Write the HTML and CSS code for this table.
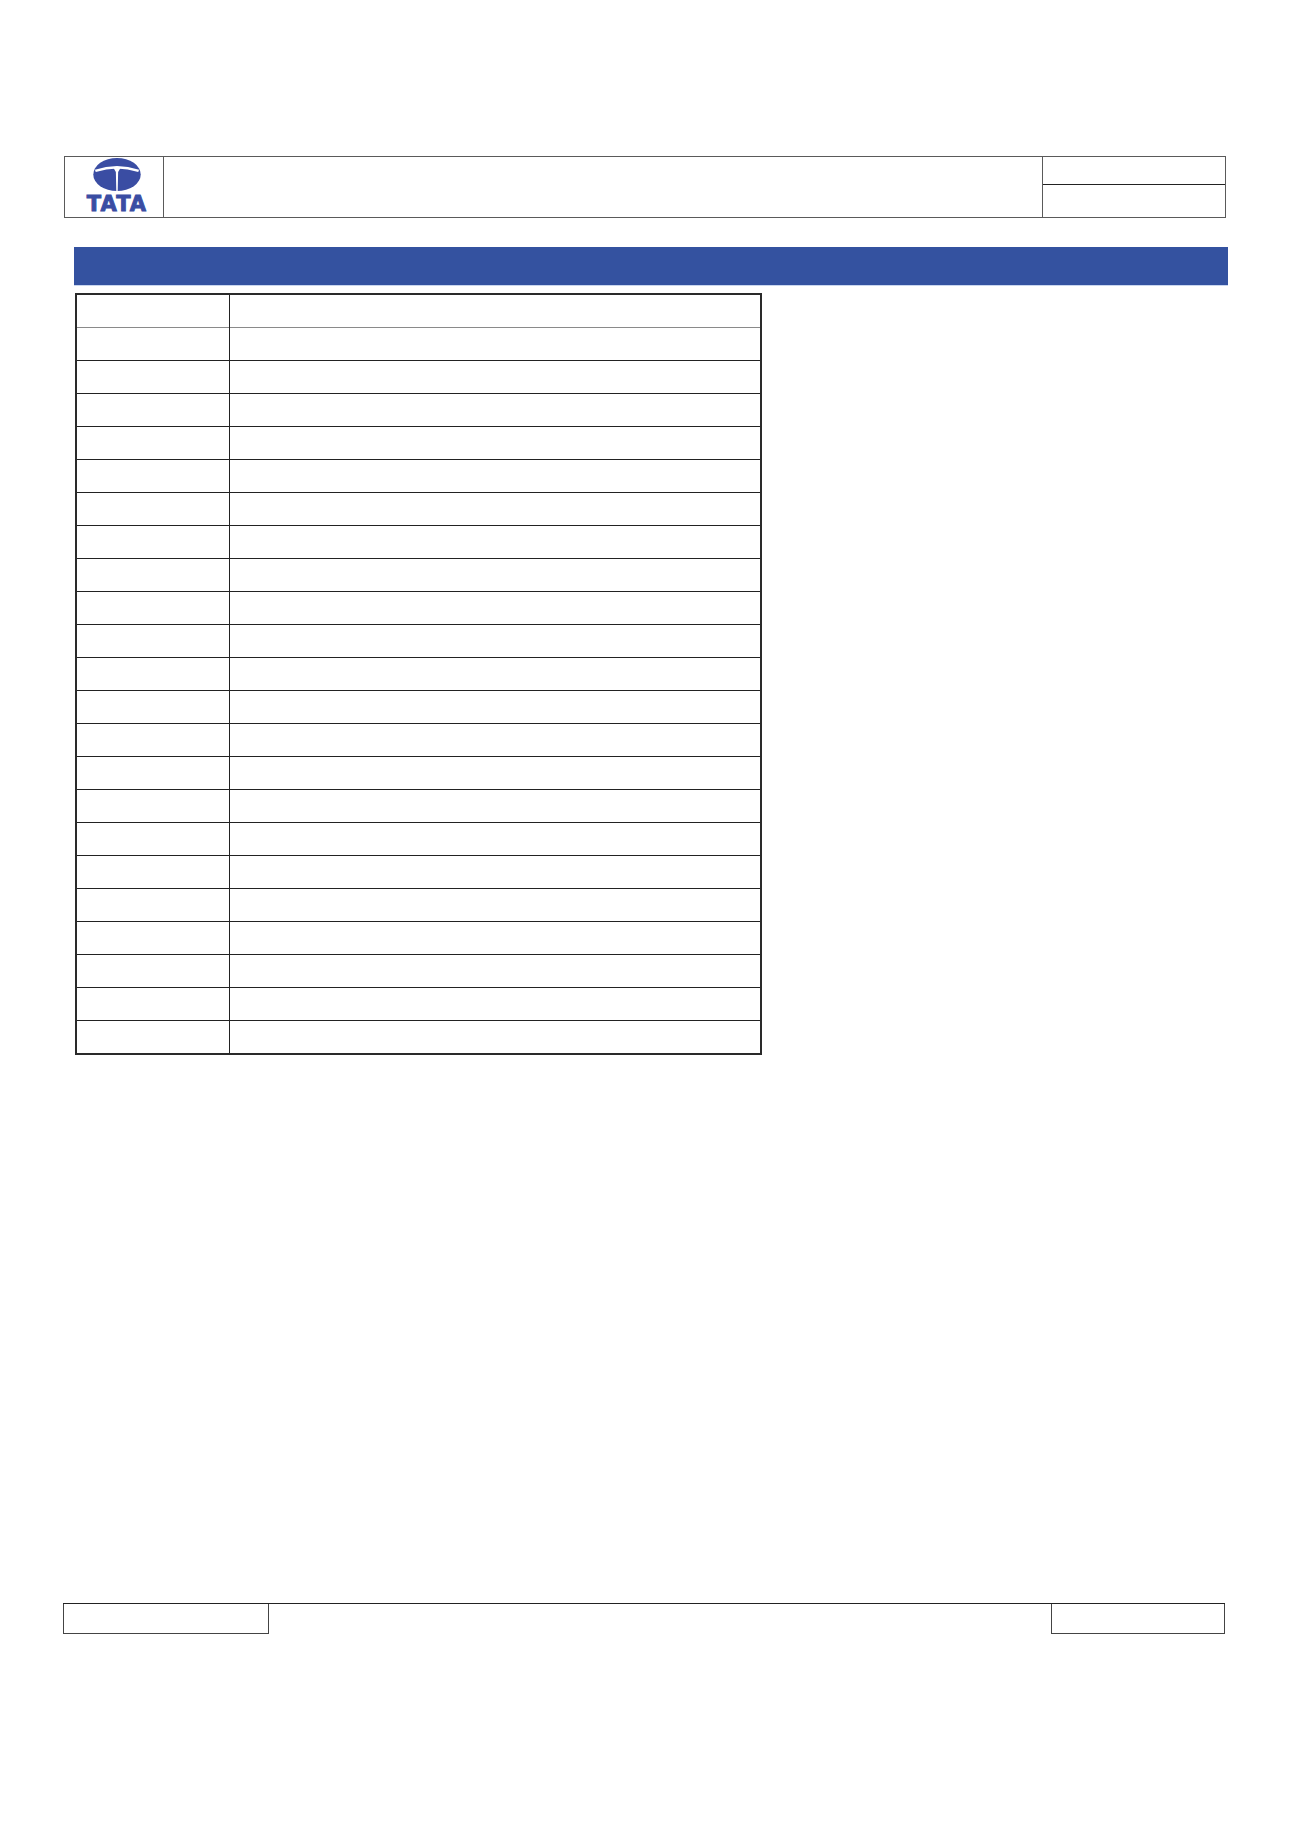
FILE: index.html
```html
<!DOCTYPE html>
<html>
<head>
<meta charset="utf-8">
<link rel="stylesheet" href="styles.css">
</head>
<body>
<div class="page">
  <header class="doc-header">
    <div class="logo-cell">
      <svg class="emblem" viewBox="0 0 46 32" width="48" height="33">
        <ellipse cx="23" cy="16" rx="23" ry="16" fill="#3a4da3"/>
        <path d="M2 12.5 Q23 5.5 44 12.5" fill="none" stroke="#fff" stroke-width="2.4"/>
        <path d="M19.5 9.5 L26.5 9.5 L24.1 13.5 L23.7 32 L22.3 32 L21.9 13.5 Z" fill="#fff"/>
      </svg>
      <span class="logo-text">TATA</span>
    </div>
    <div class="title-cell"></div>
    <div class="meta-cell">
      <div class="meta-top"></div>
      <div class="meta-bottom"></div>
    </div>
  </header>

  <div class="section-bar"></div>

  <table class="grid">
    <tbody>
      <tr><td class="c1"></td><td></td></tr>
      <tr><td class="c1"></td><td></td></tr>
      <tr><td class="c1"></td><td></td></tr>
      <tr><td class="c1"></td><td></td></tr>
      <tr><td class="c1"></td><td></td></tr>
      <tr><td class="c1"></td><td></td></tr>
      <tr><td class="c1"></td><td></td></tr>
      <tr><td class="c1"></td><td></td></tr>
      <tr><td class="c1"></td><td></td></tr>
      <tr><td class="c1"></td><td></td></tr>
      <tr><td class="c1"></td><td></td></tr>
      <tr><td class="c1"></td><td></td></tr>
      <tr><td class="c1"></td><td></td></tr>
      <tr><td class="c1"></td><td></td></tr>
      <tr><td class="c1"></td><td></td></tr>
      <tr><td class="c1"></td><td></td></tr>
      <tr><td class="c1"></td><td></td></tr>
      <tr><td class="c1"></td><td></td></tr>
      <tr><td class="c1"></td><td></td></tr>
      <tr><td class="c1"></td><td></td></tr>
      <tr><td class="c1"></td><td></td></tr>
      <tr><td class="c1"></td><td></td></tr>
      <tr class="last"><td class="c1"></td><td></td></tr>
    </tbody>
  </table>

  <footer class="doc-footer">
    <div class="foot-box foot-left"></div>
    <div class="foot-mid"></div>
    <div class="foot-box foot-right"></div>
  </footer>
</div>
</body>
</html>
```
FILE: styles.css
```css
html, body {
  margin: 0;
  padding: 0;
  background: #ffffff;
  font-family: "Liberation Sans", Arial, sans-serif;
}

.page {
  width: 1301px;
  height: 1840px;
  padding-top: 156px;
  box-sizing: border-box;
}

.doc-header {
  display: flex;
  margin-left: 64px;
  width: 1162px;
  height: 62px;
  border: 1px solid #5a5a5a;
  box-sizing: border-box;
}

.logo-cell {
  width: 99px;
  border-right: 1px solid #5a5a5a;
  display: flex;
  flex-direction: column;
  align-items: center;
  padding-top: 1px;
  box-sizing: border-box;
}

.emblem {
  display: block;
  margin-left: 6px;
}

.logo-text {
  margin-top: 3px;
  margin-left: 6px;
  font-family: "DejaVu Sans", "Liberation Sans", sans-serif;
  font-weight: bold;
  font-size: 21px;
  line-height: 20px;
  letter-spacing: 1px;
  color: #3a4da3;
  -webkit-text-stroke: 0.9px #3a4da3;
}

.title-cell {
  flex: 1;
}

.meta-cell {
  width: 182px;
  border-left: 1px solid #5a5a5a;
  display: flex;
  flex-direction: column;
}

.meta-top {
  height: 27px;
  border-bottom: 1px solid #222;
}

.meta-bottom {
  flex: 1;
}

.section-bar {
  margin-top: 29px;
  margin-left: 74px;
  width: 1154px;
  height: 39px;
  background: #3452a0;
  border-bottom: 1px solid #c9d6ef;
  box-sizing: border-box;
}

.grid {
  margin-top: 7px;
  margin-left: 75px;
  width: 687px;
  border-collapse: collapse;
  border: 2px solid #2a2a2a;
  table-layout: fixed;
}

.grid td {
  height: 32px;
  padding: 0;
  border-top: 1px solid #222;
}

.grid tr:first-child td {
  border-top: none;
}

.grid tr:nth-child(2) td {
  border-top: 1.5px solid #8a8a8a;
}

.grid tr.last td {
  height: 32px;
}

.grid td.c1 {
  width: 152px;
  border-right: 1px solid #222;
}

.doc-footer {
  display: flex;
  margin-top: 548px;
  margin-left: 63px;
  width: 1162px;
  height: 31px;
  border-top: 1px solid #222;
}

.foot-box {
  height: 30px;
  border: 1px solid #444;
  border-top: none;
  box-sizing: border-box;
}

.foot-left {
  width: 206px;
}

.foot-mid {
  flex: 1;
}

.foot-right {
  width: 174px;
}
```
